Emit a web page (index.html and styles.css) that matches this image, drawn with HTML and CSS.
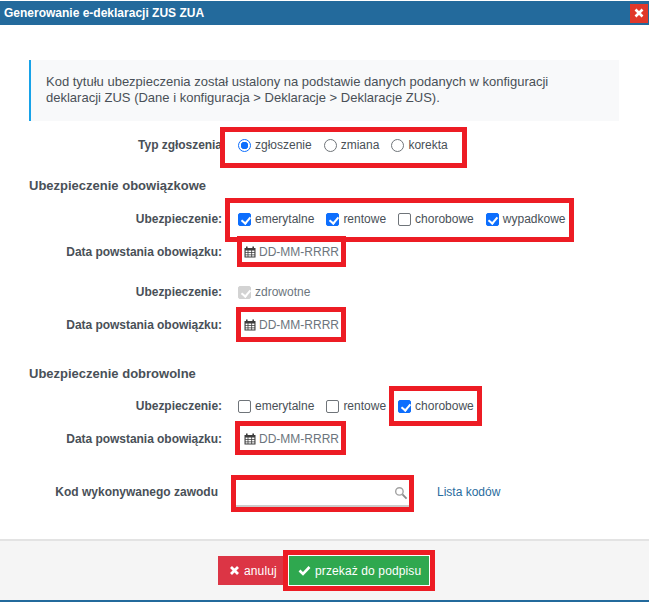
FILE: index.html
```html
<!DOCTYPE html>
<html lang="pl">
<head>
<meta charset="utf-8">
<title>Generowanie e-deklaracji ZUS ZUA</title>
<link rel="stylesheet" href="styles.css">
</head>
<body>
<svg class="defs" width="0" height="0" aria-hidden="true">
  <symbol id="cal" viewBox="0 0 12 12"><path fill="#3d3d3d" d="M2 .5h1.600V2h4.800V.5H10V2h1.500v9.500H.5V2H2zM1.600 4.600v1.700h2V4.600zm2.800 0v1.700h2.900V4.600zm3.700 0v1.700h2.300V4.600zM1.600 7v1.500h2V7zm2.800 0v1.500h2.900V7zm3.700 0v1.500h2.300V7zM1.600 9.200v1.300h2V9.200zm2.800 0v1.300h2.900V9.200zm3.700 0v1.300h2.300V9.200z"/></symbol>
</svg>
<main class="dialog">
  <header class="titlebar">
    <h1 class="title">Generowanie e-deklaracji ZUS ZUA</h1>
    <button class="close" aria-label="zamknij"><svg width="10" height="10" viewBox="0 0 10 10"><path d="M1.500 1.500l7 7M8.500 1.500l-7 7" stroke="#fff" stroke-width="2.600" fill="none"/></svg></button>
  </header>
  <div class="body">
    <p class="note">Kod tytułu ubezpieczenia został ustalony na podstawie danych podanych w konfiguracji deklaracji ZUS (Dane i konfiguracja &gt; Deklaracje &gt; Deklaracje ZUS).</p>

    <div class="row row-type">
      <span class="label">Typ zgłoszenia</span>
      <div class="opts">
        <label class="opt"><span class="radio on"></span>zgłoszenie</label>
        <label class="opt"><span class="radio"></span>zmiana</label>
        <label class="opt"><span class="radio"></span>korekta</label>
      </div>
    </div>

    <h2 class="section s1">Ubezpieczenie obowiązkowe</h2>
    <div class="row r-ins">
      <span class="label">Ubezpieczenie:</span>
      <div class="opts">
        <label class="opt"><span class="check on"></span>emerytalne</label>
        <label class="opt"><span class="check on"></span>rentowe</label>
        <label class="opt"><span class="check"></span>chorobowe</label>
        <label class="opt"><span class="check on"></span>wypadkowe</label>
      </div>
    </div>
    <div class="row r-date">
      <span class="label">Data powstania obowiązku:</span>
      <div class="date"><svg class="cal" width="12" height="12"><use href="#cal"/></svg>DD-MM-RRRR</div>
    </div>
    <div class="row r-ins2">
      <span class="label">Ubezpieczenie:</span>
      <div class="opts muted">
        <label class="opt"><span class="check off"></span>zdrowotne</label>
      </div>
    </div>
    <div class="row r-date">
      <span class="label">Data powstania obowiązku:</span>
      <div class="date"><svg class="cal" width="12" height="12"><use href="#cal"/></svg>DD-MM-RRRR</div>
    </div>

    <h2 class="section s2">Ubezpieczenie dobrowolne</h2>
    <div class="row r-ins3">
      <span class="label">Ubezpieczenie:</span>
      <div class="opts">
        <label class="opt"><span class="check"></span>emerytalne</label>
        <label class="opt"><span class="check"></span>rentowe</label>
        <label class="opt"><span class="check on"></span>chorobowe</label>
      </div>
    </div>
    <div class="row r-date">
      <span class="label">Data powstania obowiązku:</span>
      <div class="date"><svg class="cal" width="12" height="12"><use href="#cal"/></svg>DD-MM-RRRR</div>
    </div>

    <div class="row r-code">
      <span class="label label-code">Kod wykonywanego zawodu</span>
      <div class="search">
        <svg width="14" height="14" viewBox="0 0 15 15"><circle cx="5.800" cy="5.800" r="4" fill="none" stroke="#a3a3a3" stroke-width="1.500"/><path d="M9 9l4.500 4.500" stroke="#8c8c8c" stroke-width="2"/></svg>
      </div>
      <a class="codes" href="#">Lista kodów</a>
    </div>
  </div>
  <footer class="foot">
    <button class="btn cancel"><svg width="11" height="11" viewBox="0 0 11 11"><path d="M2 2l7 7M9 2l-7 7" stroke="#fff" stroke-width="2.800" fill="none"/></svg>anuluj</button>
    <button class="btn ok"><svg width="13" height="11" viewBox="0 0 13 11"><path d="M1.500 5.500l3.500 3.500 6.500-7" stroke="#fff" stroke-width="2.600" fill="none"/></svg>przekaż do podpisu</button>
  </footer>

  <span class="mark m1"></span>
  <span class="mark m2"></span>
  <span class="mark m3"></span>
  <span class="mark m4"></span>
  <span class="mark m5"></span>
  <span class="mark m6"></span>
  <span class="mark m7"></span>
  <span class="mark m8"></span>
</main>
</body>
</html>
```
FILE: styles.css
```css
* { box-sizing: border-box; }
html, body { margin: 0; padding: 0; }
body { width: 649px; height: 602px; overflow: hidden; background: #fff; font-family: "Liberation Sans", Arial, sans-serif; font-size: 12px; color: #495057; }
.defs { position: absolute; }
.dialog { position: relative; width: 649px; height: 602px; display: flex; flex-direction: column; border-bottom: 2px solid #236a9c; }
.titlebar { height: 24px; margin-top: 1px; flex: none; background: #236a9c; display: flex; align-items: center; justify-content: space-between; padding: 0 1px 0 4px; }
.title { margin: 0; font-size: 12px; font-weight: bold; color: #fff; }
.close { width: 18px; height: 19px; padding: 0; border: 0; background: #e0382a; display: flex; align-items: center; justify-content: center; }
.body { flex: 1; padding: 35px 30px 0 29px; }
.note { margin: 0; height: 61px; padding: 14px 40px 0 15px; background: #f8f9fa; border-left: 2px solid #17a2e8; font-size: 13px; line-height: 16px; color: #495057; }
.row { display: flex; align-items: center; height: 20px; }
.label { width: 193px; text-align: right; font-weight: bold; letter-spacing: -0.04px; color: #495057; flex: none; white-space: nowrap; }
.opts { display: flex; align-items: center; gap: 12px; margin-left: 16px; }
.opt { display: flex; align-items: center; gap: 4px; white-space: nowrap; }
.muted { color: #6c757d; }
.radio { width: 13px; height: 13px; border: 1px solid #6f7479; border-radius: 50%; background: #fff; flex: none; }
.radio.on { border-color: #0d6efd; background: radial-gradient(circle, #0d6efd 0 3.500px, #fff 4px); }
.check { position: relative; width: 13px; height: 13px; border: 1px solid #6f7479; border-radius: 2px; background: #fff; flex: none; }
.check.on { background: #0d6efd; border-color: #0d6efd; }
.check.off { background: #d3d3d3; border-color: #d3d3d3; }
.check.on::after, .check.off::after { content: ""; position: absolute; left: 3.500px; top: 1px; width: 4px; height: 7px; border: solid #fff; border-width: 0 2px 2px 0; transform: rotate(40deg); }
.row-type { margin-top: 14px; }
.section { margin: 0; font-size: 13px; font-weight: bold; color: #495057; height: 20px; line-height: 20px; }
.s1 { margin-top: 21px; }
.s2 { margin-top: 29px; }
.r-ins { margin-top: 13px; }
.r-ins2 { margin-top: 20px; }
.r-ins3 { margin-top: 12px; }
.r-date { margin-top: 13px; }
.date { display: flex; align-items: center; gap: 3px; margin-left: 22px; color: #6c757d; }
.r-code { margin-top: 33px; }
.label-code { width: 189px; letter-spacing: 0; }
.search { width: 173px; height: 30px; margin-left: 18px; border-bottom: 2px solid #ccc; display: flex; align-items: center; justify-content: flex-end; padding: 4px 1px 0 0; flex: none; }
.codes { margin-left: 28px; color: #2a6c9e; text-decoration: none; white-space: nowrap; }
.foot { height: 61px; flex: none; background: #f5f5f5; border-top: 2px solid #e3e3e3; display: flex; align-items: center; padding: 0 0 0 218px; gap: 5px; }
.btn { height: 29px; border: 0; color: #fff; font: 12px "Liberation Sans", Arial, sans-serif; letter-spacing: 0.12px; display: flex; align-items: center; gap: 4px; padding: 0 0 0 11px; white-space: nowrap; }
.btn svg { flex: none; }
.cancel { width: 65px; background: #dc3545; }
.ok { width: 142px; height: 31px; padding: 0 0 0 9px; background: #2fa84f; border: 1px solid #fff; }
.mark { position: absolute; border: 5px solid #ed1c24; pointer-events: none; }
.m1 { left: 220px; top: 127px; width: 247px; height: 41px; }
.m2 { left: 225px; top: 198px; width: 349px; height: 44px; }
.m3 { left: 237px; top: 236px; width: 109px; height: 31px; }
.m4 { left: 236px; top: 307px; width: 110px; height: 35px; }
.m5 { left: 389px; top: 386px; width: 93px; height: 40px; }
.m6 { left: 235px; top: 421px; width: 111px; height: 34px; }
.m7 { left: 231px; top: 475px; width: 183px; height: 37px; }
.m8 { left: 283px; top: 550px; width: 152px; height: 41px; }
```
